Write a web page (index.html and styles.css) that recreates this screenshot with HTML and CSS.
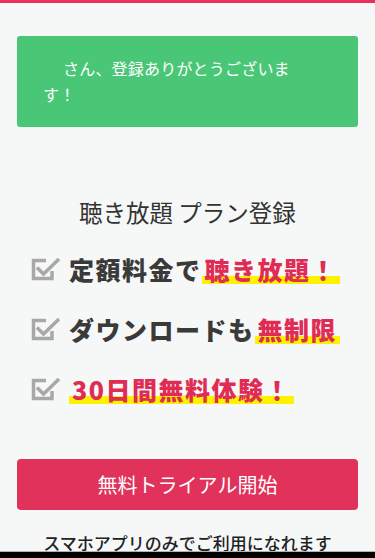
FILE: index.html
```html
<!DOCTYPE html>
<html lang="ja">
<head>
  <meta charset="UTF-8">
  <title>聴き放題 プラン登録</title>
  <link rel="stylesheet" href="styles.css">
</head>
<body>

  <div class="page">
    <div class="welcome">
      <p><span class="user-name"></span>さん、登録ありがとうございます！</p>
    </div>

    <h1 class="plan-title">聴き放題 プラン登録</h1>

    <ul class="features">
      <li>
        <svg class="check" viewBox="0 0 30 24"><path d="M15 3.5H2.5V21.5H21V14" /><path d="M6 10.5L12.5 17L28 2" /></svg>
        <span class="feature-text">定額料金で<span class="mark">聴き放題！</span></span>
      </li>
      <li>
        <svg class="check" viewBox="0 0 30 24"><path d="M15 3.5H2.5V21.5H21V14" /><path d="M6 10.5L12.5 17L28 2" /></svg>
        <span class="feature-text">ダウンロードも<span class="mark">無制限</span></span>
      </li>
      <li>
        <svg class="check" viewBox="0 0 30 24"><path d="M15 3.5H2.5V21.5H21V14" /><path d="M6 10.5L12.5 17L28 2" /></svg>
        <span class="feature-text"><span class="mark">30日間無料体験！</span></span>
      </li>
    </ul>

    <button class="trial-btn">無料トライアル開始</button>

    <p class="app-note">スマホアプリのみでご利用になれます</p>
  </div>

  <div class="bottom-bar"></div>

</body>
</html>
```

FILE: styles.css
```css
* {
  box-sizing: border-box;
  margin: 0;
  padding: 0;
}
body {
  background: #f6f7f7;
  border-top: 3px solid #e8305a;
  font-family: "Noto Sans CJK JP", "Noto Sans", sans-serif;
  color: #333;
  overflow: hidden;
}
.page {
  padding: 33px 17px 0;
}
.welcome {
  background: #4ac776;
  border-radius: 3px;
  padding: 19px 60px 20px 26px;
  color: #fff;
  font-size: 16px;
  line-height: 26px;
  letter-spacing: 0.2px;
}
.user-name {
  display: inline-block;
  width: 20px;
}
.plan-title {
  margin-top: 69px;
  text-align: center;
  font-size: 23.5px;
  line-height: 32px;
  font-weight: normal;
  color: #333;
}
.features {
  list-style: none;
  margin-top: 11px;
  padding-left: 14px;
}
.features li {
  display: flex;
  align-items: center;
  height: 60px;
  gap: 8px;
}
.check {
  width: 30px;
  height: 24px;
  flex-shrink: 0;
  fill: none;
  stroke: #a8a8a8;
  stroke-width: 3.5;
}
.feature-text {
  font-size: 25px;
  font-weight: 900;
  letter-spacing: 1.5px;
  color: #3a3a3a;
  white-space: nowrap;
}
.mark {
  color: #e02c55;
  padding: 0 3px;
  background: linear-gradient(transparent 70%, #fff200 70%, #fff200 93%, transparent 93%);
}
.trial-btn {
  display: block;
  width: 100%;
  height: 51px;
  margin-top: 40px;
  border: none;
  border-radius: 4px;
  background: #e0325a;
  color: #fff;
  font-family: inherit;
  font-size: 20px;
}
.app-note {
  margin-top: 21px;
  text-align: center;
  font-size: 17px;
  line-height: 24px;
  font-weight: 500;
  color: #222;
}
.bottom-bar {
  position: fixed;
  left: 0;
  right: 0;
  bottom: 0;
  height: 7px;
  background: #000;
  border-top: 1px solid #b0b0b0;
}
```
